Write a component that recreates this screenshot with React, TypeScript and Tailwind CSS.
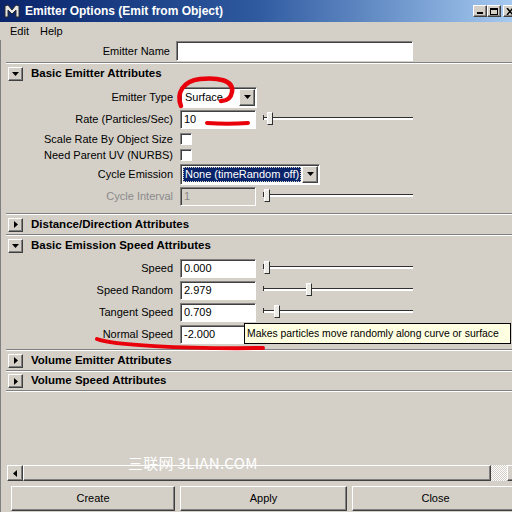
import React, { FC, ReactNode } from "react";

const sunken =
  "border border-t-[#808080] border-l-[#808080] border-b-white border-r-white shadow-[inset_1px_1px_0_#404040]";
const raised =
  "border border-t-white border-l-white border-b-[#404040] border-r-[#404040] shadow-[inset_-1px_-1px_0_#808080]";

const DownTri = () => (
  <svg width="7" height="4" viewBox="0 0 7 4">
    <polygon points="0,0 7,0 3.5,4" fill="#000" />
  </svg>
);

const RightTri = () => (
  <svg width="4" height="7" viewBox="0 0 4 7">
    <polygon points="0,0 4,3.5 0,7" fill="#000" />
  </svg>
);

const LeftTri = () => (
  <svg width="4" height="7" viewBox="0 0 4 7">
    <polygon points="4,0 0,3.5 4,7" fill="#000" />
  </svg>
);

const MayaIcon = () => (
  <svg width="16" height="16" viewBox="0 0 16 16">
    <polygon
      points="1,14 1,3 4,2 8,7 12,2 15,3 15,14 12,14 12,7 8,11 4,7 4,14"
      fill="#e6e6e6"
      stroke="#2a2a2a"
      strokeWidth="1"
    />
  </svg>
);

const Separator = () => (
  <div className="h-[2px] shrink-0 border-t border-t-[#808080] border-b border-b-white" />
);

const SectionHeader: FC<{ title: string; open?: boolean; h: string }> = ({
  title,
  open,
  h,
}) => (
  <div className={`flex items-center shrink-0 ${h}`}>
    <div
      className={`ml-[2px] w-[15px] h-[14px] flex items-center justify-center bg-[#d4d0c8] ${raised}`}
    >
      {open ? <DownTri /> : <RightTri />}
    </div>
    <span className="ml-[8px] font-bold text-[11.5px]">{title}</span>
  </div>
);

const Row: FC<{ label: string; h?: string; disabled?: boolean; children?: ReactNode }> = ({
  label,
  h = "h-[22px]",
  disabled,
  children,
}) => (
  <div className={`flex items-center shrink-0 ${h}`}>
    <div
      className={`w-[167px] text-right whitespace-nowrap ${disabled ? "text-[#8a8a8a]" : ""}`}
    >
      {label}
    </div>
    <div className="ml-[7px] flex items-center">{children}</div>
  </div>
);

const Field: FC<{ value: string; disabled?: boolean }> = ({ value, disabled }) => (
  <div
    className={`w-[76px] h-[19px] flex items-center pl-[3px] ${sunken} ${
      disabled ? "bg-[#d4d0c8] text-[#8a8a8a]" : "bg-white"
    }`}
  >
    {value}
  </div>
);

const Slider: FC<{ thumb: string }> = ({ thumb }) => (
  <div className="relative ml-[7px] w-[150px] h-[16px]">
    <div className="absolute left-0 right-0 top-[6px] h-[3px] border-t border-t-[#303030] bg-white" />
    <div className="absolute left-0 top-[4px] w-[1px] h-[5px] bg-[#303030]" />
    <div
      className={`absolute top-[1px] w-[6px] h-[13px] bg-[#ecebe6] border border-t-white border-l-white border-b-[#303030] border-r-[#303030] ${thumb}`}
    />
  </div>
);

const Checkbox = () => <div className={`w-[12px] h-[12px] bg-white ${sunken}`} />;

const Dropdown: FC<{ value: string; w: string; selected?: boolean }> = ({
  value,
  w,
  selected,
}) => (
  <div className={`${w} h-[21px] flex items-stretch bg-white p-[1px] ${sunken}`}>
    <div className="flex-1 flex items-center p-[1px]">
      <div
        className={`h-full w-full flex items-center pl-[2px] whitespace-nowrap ${
          selected ? "bg-[#0a246a] text-white outline-1 outline-dotted outline-[#d4d0c8] -outline-offset-1" : ""
        }`}
      >
        {value}
      </div>
    </div>
    <div className={`w-[16px] flex items-center justify-center bg-[#d4d0c8] ${raised}`}>
      <DownTri />
    </div>
  </div>
);

const WinButton: FC<{ label: string; w: string }> = ({ label, w }) => (
  <div className={`${w} h-[25px] flex items-center justify-center bg-[#d4d0c8] ${raised}`}>
    {label}
  </div>
);

export default function App() {
  return (
    <div className="relative w-[512px] h-[512px] overflow-hidden bg-[#d4d0c8] flex flex-col font-['Liberation_Sans',Arial,sans-serif] text-[11px] text-black">
      {/* title bar */}
      <div className="h-[22px] shrink-0 flex items-center pl-[4px] bg-linear-to-r from-[#0a246a] via-[#2f5aa0] to-[#a6caf0]">
        <MayaIcon />
        <span className="ml-[5px] text-white font-bold text-[12px] whitespace-nowrap">
          Emitter Options (Emit from Object)
        </span>
        <div className="ml-auto mr-[-5px] flex items-center shrink-0">
          <div className={`w-[14px] h-[12px] bg-[#d4d0c8] relative ${raised}`}>
            <div className="absolute left-[3px] bottom-[2px] w-[6px] h-[2px] bg-black" />
          </div>
          <div className={`w-[14px] h-[12px] bg-[#d4d0c8] flex items-center justify-center ${raised}`}>
            <div className="w-[8px] h-[7px] border border-black border-t-2" />
          </div>
          <div className={`ml-[2px] w-[14px] h-[12px] bg-[#d4d0c8] flex items-center justify-center ${raised}`}>
            <svg width="8" height="7" viewBox="0 0 8 7">
              <path d="M1 0 L7 7 M7 0 L1 7" stroke="#000" strokeWidth="1.5" />
            </svg>
          </div>
        </div>
      </div>

      {/* menu */}
      <div className="h-[18px] shrink-0 flex items-center pl-[10px] gap-[11px]">
        <span>Edit</span>
        <span>Help</span>
      </div>

      {/* body */}
      <div className="flex-1 flex flex-col pl-[5px] border-l border-l-[#808080]">
        <div className="h-[22px] shrink-0 flex items-center">
          <div className="w-[164px] text-right">Emitter Name</div>
          <div className={`ml-[6px] w-[237px] h-[20px] bg-white ${sunken}`} />
        </div>

        <Separator />
        <SectionHeader title="Basic Emitter Attributes" open h="h-[19px]" />
        <div className="h-[3px] shrink-0" />
        <Row label="Emitter Type">
          <Dropdown value="Surface" w="w-[77px]" />
        </Row>
        <Row label="Rate (Particles/Sec)">
          <Field value="10" />
          <Slider thumb="left-[4px]" />
        </Row>
        <div className="h-[1px] shrink-0" />
        <Row label="Scale Rate By Object Size" h="h-[16px]">
          <Checkbox />
        </Row>
        <Row label="Need Parent UV (NURBS)" h="h-[16px]">
          <Checkbox />
        </Row>
        <Row label="Cycle Emission">
          <Dropdown value="None (timeRandom off)" w="w-[140px]" selected />
        </Row>
        <Row label="Cycle Interval" disabled>
          <Field value="1" disabled />
          <Slider thumb="left-[1px]" />
        </Row>
        <div className="h-[6px] shrink-0" />

        <Separator />
        <SectionHeader title="Distance/Direction Attributes" h="h-[19px]" />
        <Separator />
        <SectionHeader title="Basic Emission Speed Attributes" open h="h-[19px]" />
        <div className="h-[2px] shrink-0" />
        <Row label="Speed">
          <Field value="0.000" />
          <Slider thumb="left-[1px]" />
        </Row>
        <Row label="Speed Random">
          <Field value="2.979" />
          <Slider thumb="left-[43px]" />
        </Row>
        <Row label="Tangent Speed">
          <Field value="0.709" />
          <Slider thumb="left-[11px]" />
        </Row>
        <Row label="Normal Speed">
          <Field value="-2.000" />
          <Slider thumb="left-[1px]" />
        </Row>
        <div className="h-[4px] shrink-0" />

        <Separator />
        <SectionHeader title="Volume Emitter Attributes" h="h-[19px]" />
        <Separator />
        <SectionHeader title="Volume Speed Attributes" h="h-[18px]" />
        <Separator />

        <div className="flex-1" />

        {/* horizontal scrollbar */}
        <div className="h-[16px] shrink-0 flex ml-[1px]">
          <div className={`w-[16px] shrink-0 flex items-center justify-center bg-[#d4d0c8] ${raised}`}>
            <LeftTri />
          </div>
          <div className={`w-[468px] shrink-0 bg-[#d4d0c8] ${raised}`} />
          <div className="w-[16px] shrink-0 bg-[image:repeating-conic-gradient(#ffffff_0%_25%,#d4d0c8_0%_50%)] bg-size-[2px_2px]" />
          <div className={`w-[16px] shrink-0 bg-[#d4d0c8] ${raised}`} />
        </div>

        <div className="h-[5px] shrink-0" />
        <div className="h-[25px] shrink-0 flex gap-[5px] ml-[5px]">
          <WinButton label="Create" w="w-[164px] shrink-0" />
          <WinButton label="Apply" w="w-[167px] shrink-0" />
          <WinButton label="Close" w="w-[167px] shrink-0" />
        </div>
        <div className="h-[1px] shrink-0" />
      </div>

      {/* tooltip */}
      <div className="absolute left-[244px] top-[323px] w-[267px] h-[21px] bg-[#ffffe1] border border-black flex items-center pl-[2px] whitespace-nowrap text-[10.4px]">
        Makes particles move randomly along curve or surface
      </div>

      {/* watermark */}
      <div className="absolute left-[128px] top-[452px] text-white text-[15px] tracking-[0.3px] whitespace-nowrap font-['Noto_Sans_CJK_SC','Liberation_Sans',sans-serif]">
        三联网 3LIAN.COM
      </div>

      {/* red annotations */}
      <svg className="absolute inset-0 pointer-events-none" width="512" height="512" viewBox="0 0 512 512">
        <path
          d="M181 106 C176 93 183 81 200 79 C217 77 234 80 232 92 C231 98 227 101 221 101"
          fill="none"
          stroke="#e8000a"
          strokeWidth="4.5"
          strokeLinecap="round"
        />
        <path d="M207 123 C220 124 235 124 248 123" fill="none" stroke="#e8000a" strokeWidth="4" strokeLinecap="round" />
        <path d="M97 339 C112 345 180 349 263 348" fill="none" stroke="#e8000a" strokeWidth="4" strokeLinecap="round" />
      </svg>
    </div>
  );
}
